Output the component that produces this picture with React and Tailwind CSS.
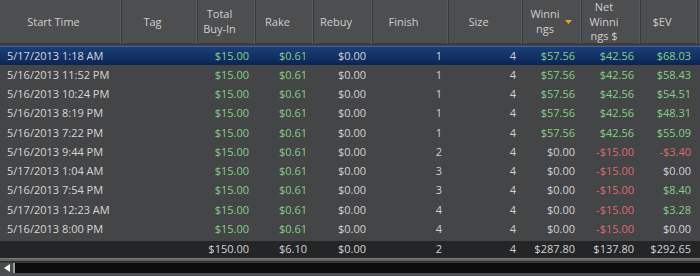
import React from 'react';

const COLS = 'grid grid-cols-[122px_76px_58px_58px_59px_76px_74px_59px_59px_57px_2px]';

const HEADERS = [
  ['Start Time'],
  ['Tag'],
  ['Total', 'Buy-In'],
  ['Rake'],
  ['Rebuy'],
  ['Finish'],
  ['Size'],
  ['Winni', 'ngs'],
  ['Net', 'Winni', 'ngs $'],
  ['$EV'],
];

const ROWS = [
  ['5/17/2013 1:18 AM', '1', '$57.56', '$42.56', '$68.03'],
  ['5/16/2013 11:52 PM', '1', '$57.56', '$42.56', '$58.43'],
  ['5/16/2013 10:24 PM', '1', '$57.56', '$42.56', '$54.51'],
  ['5/16/2013 8:19 PM', '1', '$57.56', '$42.56', '$48.31'],
  ['5/16/2013 7:22 PM', '1', '$57.56', '$42.56', '$55.09'],
  ['5/16/2013 9:44 PM', '2', '$0.00', '-$15.00', '-$3.40'],
  ['5/17/2013 1:04 AM', '3', '$0.00', '-$15.00', '$0.00'],
  ['5/16/2013 7:54 PM', '3', '$0.00', '-$15.00', '$8.40'],
  ['5/17/2013 12:23 AM', '4', '$0.00', '-$15.00', '$3.28'],
  ['5/16/2013 8:00 PM', '4', '$0.00', '-$15.00', '$0.00'],
];

// money tint: positive green, negative red, zero stays plain
const tone = v => (v.startsWith('-') ? 'text-[#dd6b6b]' : v === '$0.00' ? 'text-[#d2d2d2]' : 'text-[#86cf86]');

const Num = ({ children, cls = 'text-[#d2d2d2]' }) => (
  <div className={`text-right pr-[7px] ${cls}`}>{children}</div>
);

export default function App() {
  return (
    <div
      className="w-[700px] h-[276px] bg-[#444547] overflow-hidden flex flex-col text-[11px]"
      style={{ fontFamily: '"Open Sans", "Noto Sans", sans-serif' }}
    >
      {/* header */}
      <div className={`${COLS} h-[45px] bg-[#4d4e50] border-b-2 border-[#3a3b3d] text-[#cfcfcf] leading-[14.5px]`}>
        {HEADERS.map((lines, i) => (
          <div
            key={i}
            className="relative flex flex-col items-center justify-center pr-[14px] border-r border-[#3a3b3d] shadow-[inset_-1px_0_0_#58595b]"
          >
            {lines.map(l => <span key={l}>{l}</span>)}
            {i === 7 && (
              <svg className="absolute right-[9px] top-[20px]" width="7" height="4" viewBox="0 0 7 4">
                <polygon points="0,0 7,0 3.5,4" fill="#f0a030" />
              </svg>
            )}
          </div>
        ))}
        <div />
      </div>

      {/* rows */}
      <div className="flex flex-col pt-px">
        {ROWS.map(([time, finish, win, net, ev], i) => (
          <div
            key={time}
            className={`${COLS} h-[19.3px] items-center ${i === 0 ? 'bg-gradient-to-b from-[#1b3f7a] to-[#0b2552] border-t border-[#3d639c]' : ''}`}
          >
            <div className="pl-[7px] text-[#d6d6d6] whitespace-nowrap">{time}</div>
            <div />
            <Num cls="text-[#86cf86]">$15.00</Num>
            <Num cls="text-[#86cf86]">$0.61</Num>
            <Num>$0.00</Num>
            <Num>{finish}</Num>
            <Num>4</Num>
            <Num cls={tone(win)}>{win}</Num>
            <Num cls={tone(net)}>{net}</Num>
            <Num cls={tone(ev)}>{ev}</Num>
            <div />
          </div>
        ))}
      </div>

      {/* totals */}
      <div className={`${COLS} h-[17px] mt-auto items-center bg-[#232527] text-[#d4d4d4]`}>
        <div />
        <div />
        <Num>$150.00</Num>
        <Num>$6.10</Num>
        <Num>$0.00</Num>
        <Num>2</Num>
        <Num>4</Num>
        <Num>$287.80</Num>
        <Num>$137.80</Num>
        <Num>$292.65</Num>
        <div />
      </div>

      {/* horizontal scrollbar */}
      <div className="h-[18px] flex flex-col">
        <div className="h-[3px] bg-[#606163] border-t border-[#77787a]" />
        <div className="h-px bg-[#2c2d2f]" />
        <div className="flex-1 flex bg-[#0c0c0c] border-t border-[#3a3a3a]">
          <div className="w-[15px] flex items-center justify-center bg-[#4a4b4d] border-r-2 border-[#9a9a9a]">
            <svg width="6" height="8" viewBox="0 0 6 8">
              <polygon points="6,0 6,8 0,4" fill="#f2f2f2" />
            </svg>
          </div>
          <div className="flex-1" />
        </div>
        <div className="h-[3px] bg-[#4c4d4f]" />
      </div>
    </div>
  );
}
